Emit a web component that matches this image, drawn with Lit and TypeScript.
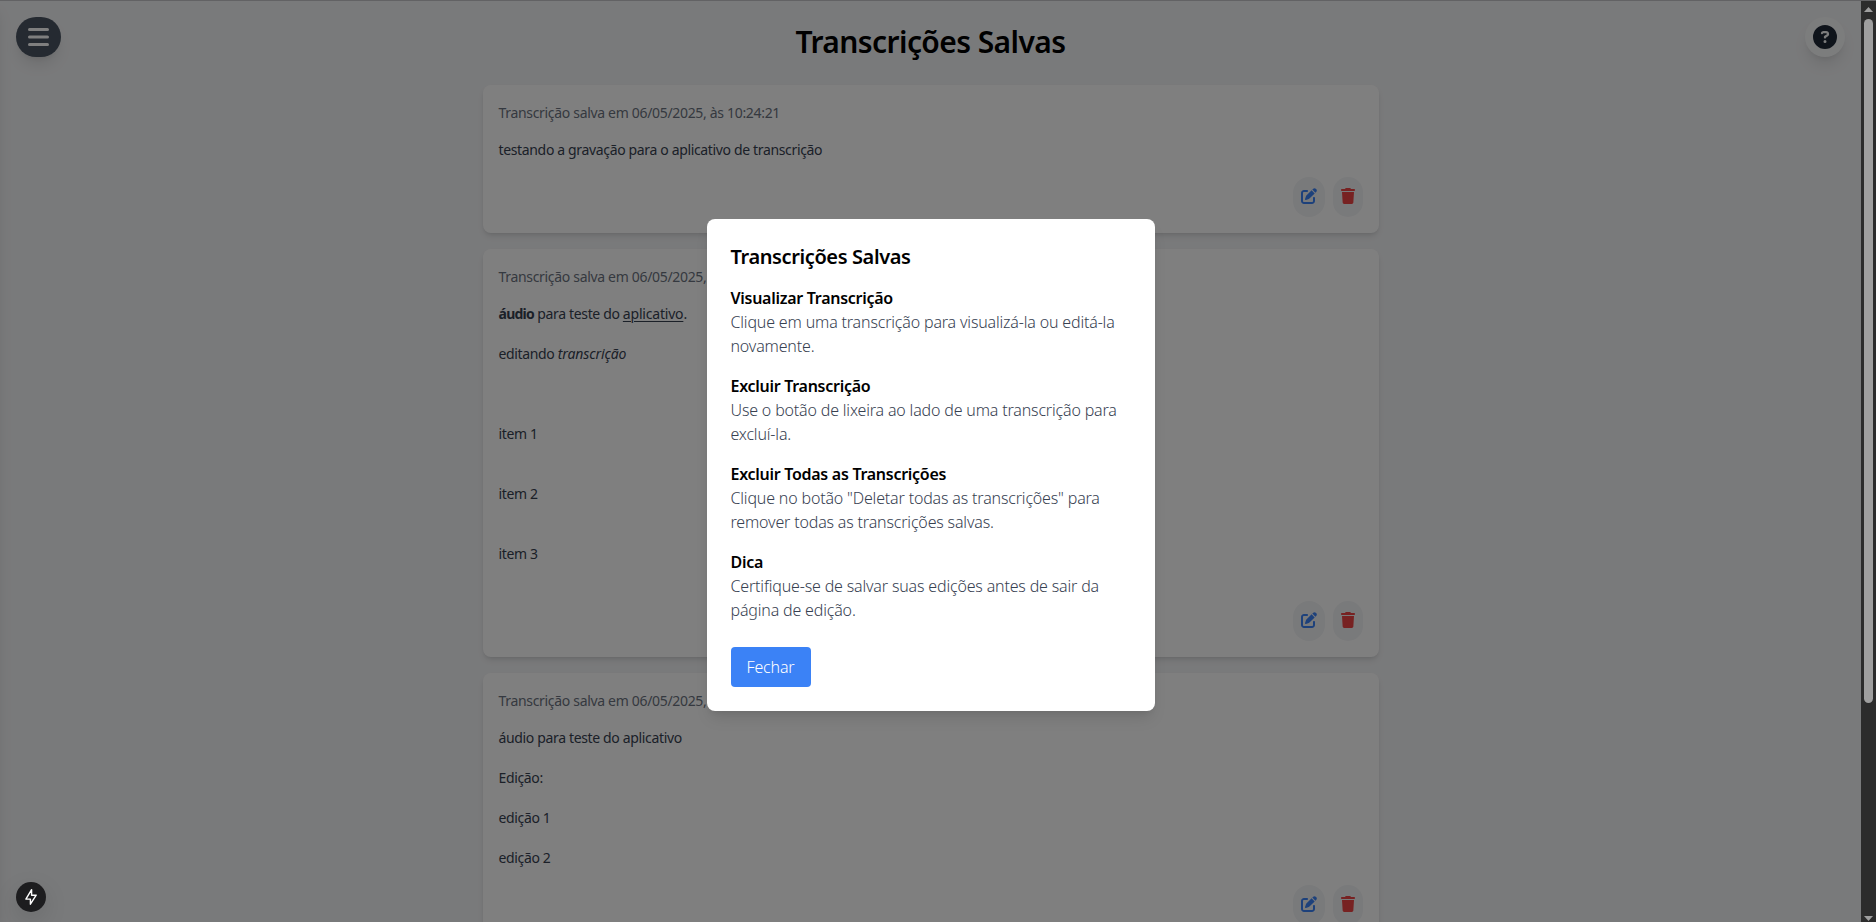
import { LitElement, html, css, svg } from "lit";
import { customElement } from "lit/decorators.js";

const barsIcon = html`<svg class="bars" viewBox="0 0 448 512">${[64, 224, 384].map(
  (y) => svg`<rect x="0" y=${y} width="448" height="64" rx="32"></rect>`
)}</svg>`;

const helpIcon = html`<svg class="help-icon" viewBox="0 0 512 512"><path d="M256 512A256 256 0 1 0 256 0a256 256 0 1 0 0 512zM169.8 165.3c7.9-22.3 29.1-37.3 52.8-37.3h58.3c34.9 0 63.1 28.3 63.1 63.1c0 22.6-12.1 43.5-31.7 54.8L280 264.4c-.2 13-10.9 23.6-24 23.6c-13.3 0-24-10.7-24-24V250.5c0-8.6 4.6-16.5 12.1-20.8l44.3-25.4c4.7-2.7 7.6-7.7 7.6-13.1c0-8.4-6.8-15.1-15.1-15.1H222.6c-3.4 0-6.4 2.1-7.5 5.3l-.4 1.2c-4.4 12.5-18.2 19-30.6 14.6s-19-18.2-14.6-30.6l.3-1.2zM224 352a32 32 0 1 1 64 0 32 32 0 1 1 -64 0z"/></svg>`;

const editIcon = html`<svg class="edit-icon" viewBox="0 0 512 512"><path d="M471.6 21.7c-21.9-21.9-57.3-21.9-79.2 0L362.3 51.7l97.9 97.9 30.1-30.1c21.9-21.9 21.9-57.3 0-79.2L471.6 21.7zm-299.2 220c-6.1 6.1-10.8 13.6-13.5 21.9l-29.6 88.8c-2.9 8.6-.6 18.1 5.8 24.6s15.9 8.7 24.6 5.8l88.8-29.6c8.2-2.7 15.7-7.4 21.9-13.5L437.7 172.3 339.7 74.3 172.4 241.7zM96 64C43 64 0 107 0 160V416c0 53 43 96 96 96H352c53 0 96-43 96-96V320c0-17.7-14.3-32-32-32s-32 14.3-32 32v96c0 17.7-14.3 32-32 32H96c-17.7 0-32-14.3-32-32V160c0-17.7 14.3-32 32-32h96c17.7 0 32-14.3 32-32s-14.3-32-32-32H96z"/></svg>`;

const trashIcon = html`<svg class="trash-icon" viewBox="0 0 448 512"><path d="M135.2 17.7L128 32H32C14.3 32 0 46.3 0 64S14.3 96 32 96H416c17.7 0 32-14.3 32-32s-14.3-32-32-32H320l-7.2-14.3C307.4 6.8 296.3 0 284.2 0H163.8c-12.1 0-23.2 6.8-28.6 17.7zM416 128H32L53.2 467c1.6 25.3 22.6 45 47.9 45H346.9c25.3 0 46.3-19.7 47.9-45L416 128z"/></svg>`;

const cards = [
  { time: "10:24:21", lines: [html`testando a gravação para o aplicativo de transcrição`] },
  {
    time: "10:20:47",
    lines: [
      html`<b>áudio</b> para teste do <u>aplicativo</u>.`, "",
      html`editando <i>transcrição</i>`, "", "", "",
      "item 1", "", "",
      "item 2", "", "",
      "item 3", "",
    ],
  },
  {
    time: "10:18:05",
    lines: ["áudio para teste do aplicativo", "", "Edição:", "", "edição 1", "", "edição 2"],
  },
];

const help = [
  ["Visualizar Transcrição", "Clique em uma transcrição para visualizá-la ou editá-la novamente."],
  ["Excluir Transcrição", "Use o botão de lixeira ao lado de uma transcrição para excluí-la."],
  ["Excluir Todas as Transcrições", 'Clique no botão "Deletar todas as transcrições" para remover todas as transcrições salvas.'],
  ["Dica", "Certifique-se de salvar suas edições antes de sair da página de edição."],
];

@customElement("app-root")
export class AppRoot extends LitElement {
  static styles = css`
    :host {
      display: flex;
      height: 922px;
      box-sizing: border-box;
      border-top: 1px solid #626264;
      position: relative;
      overflow: hidden;
      font-family: "Noto Sans", sans-serif;
      font-size: 16px;
      line-height: 24px;
      font-weight: 300;
    }
    * { box-sizing: border-box; }
    h1, h2, h3, p { margin: 0; }
    button { border: 0; margin: 0; font: inherit; display: flex; align-items: center; justify-content: center; }
    svg { display: block; fill: currentColor; flex: none; }

    .viewport { position: relative; flex: 1; min-width: 0; height: 921px; overflow: hidden; background: #f3f4f6; }
    .drawer {
      position: absolute; left: -256px; top: 0; bottom: 0; width: 256px;
      box-shadow: 0 10px 15px -3px rgba(0, 0, 0, 0.1), 0 4px 6px -4px rgba(0, 0, 0, 0.1);
    }
    .menu, .help {
      position: absolute; top: 16px; height: 40px; border-radius: 9999px;
      box-shadow: 0 10px 15px -3px rgba(0, 0, 0, 0.1), 0 4px 6px -4px rgba(0, 0, 0, 0.1);
    }
    .menu { left: 16px; width: 45px; background: #4b5563; color: #fff; padding: 0 12px; }
    .help { right: 16px; width: 40px; padding: 8px; background: #f9fafb; color: #1f2937; }
    .bars { width: 21px; height: 24px; }
    .help-icon { width: 24px; height: 24px; }

    .main { display: flex; flex-direction: column; align-items: center; padding: 23px 24px 24px; }
    h1 { font-size: 30px; line-height: 36px; font-weight: 600; letter-spacing: -0.58px; margin-bottom: 25px; color: #000; }
    .list { display: flex; flex-direction: column; gap: 16px; width: 896px; }
    .card {
      background: #fff; border-radius: 8px; padding: 16px;
      box-shadow: 0 4px 6px -1px rgba(0, 0, 0, 0.1), 0 2px 4px -2px rgba(0, 0, 0, 0.1);
      display: flex; flex-direction: column;
      font-size: 14px; font-weight: 400;
    }
    .date { line-height: 24px; color: #6b7280; letter-spacing: -0.32px; }
    .text { margin: 15px 0 17px; line-height: 20px; color: #374151; letter-spacing: -0.35px; }
    .row { min-height: 20px; }
    .text b { font-weight: 700; letter-spacing: -0.75px; }
    .text i { letter-spacing: -0.11px; }
    .text u { letter-spacing: -0.2px; text-underline-offset: 2px; text-decoration-thickness: 1px; }
    .actions { display: flex; justify-content: flex-end; gap: 8px; }
    .round { height: 40px; padding: 7px 8px 9px; border-radius: 9999px; background: #f3f4f6; }
    .edit { color: #3b82f6; }
    .trash { color: #ef4444; }
    .edit-icon { width: 16px; height: 16px; }
    .trash-icon { width: 14px; height: 16px; }

    .overlay {
      position: absolute; inset: 0; background: rgba(0, 0, 0, 0.5);
      display: flex; align-items: center; justify-content: center; padding-top: 7px;
    }
    .modal {
      width: 448px; padding: 24px; background: #fff; border-radius: 8px;
      box-shadow: 0 10px 15px -3px rgba(0, 0, 0, 0.1), 0 4px 6px -4px rgba(0, 0, 0, 0.1);
      display: flex; flex-direction: column; align-items: flex-start;
    }
    h2 { font-size: 20px; line-height: 28px; font-weight: 600; letter-spacing: -0.387px; margin-bottom: 15px; color: #000; }
    .sections { display: flex; flex-direction: column; gap: 16px; margin-bottom: 25px; }
    h3 { font-size: 16px; line-height: 24px; font-weight: 600; letter-spacing: -0.28px; color: #000; }
    .sections p { color: #374151; letter-spacing: -0.17px; }
    .close { height: 40px; width: 80px; padding: 0 0 1px; border-radius: 4px; background: #3b82f6; color: #fff; letter-spacing: -0.15px; }

    .dev {
      position: absolute; left: 16px; bottom: 10px; width: 30px; height: 30px; border-radius: 50%;
      background: #1d1d1f; box-shadow: 0 8px 24px rgba(0, 0, 0, 0.12);
    }
    .dev svg { fill: none; stroke: #fff; stroke-width: 1.4; stroke-linejoin: round; }

    .scroll { width: 15px; height: 921px; background: #2c2c2c; color: #9f9f9f; display: flex; flex-direction: column; align-items: center; padding: 6px 0 1px; }
    .thumb { width: 9px; height: 684px; border-radius: 5px; background: #9f9f9f; margin: 7px 0 auto; }
  `;

  render() {
    return html`
      <div class="viewport">
        <div class="main">
          <h1>Transcrições Salvas</h1>
          <div class="list">
            ${cards.map(
              (c) => html`<article class="card">
                <p class="date">Transcrição salva em 06/05/2025, às ${c.time}</p>
                <div class="text">${c.lines.map((l) => html`<div class="row">${l}</div>`)}</div>
                <div class="actions">
                  <button class="round edit">${editIcon}</button>
                  <button class="round trash">${trashIcon}</button>
                </div>
              </article>`
            )}
          </div>
        </div>
        <div class="drawer"></div>
        <button class="menu">${barsIcon}</button>
        <button class="help">${helpIcon}</button>
        <div class="overlay">
          <div class="modal">
            <h2>Transcrições Salvas</h2>
            <div class="sections">
              ${help.map(([t, d]) => html`<section><h3>${t}</h3><p>${d}</p></section>`)}
            </div>
            <button class="close">Fechar</button>
          </div>
        </div>
        <div class="dev">
          <svg width="30" height="30" viewBox="0 0 30 30"><path d="M15.6 7.6 9.9 17.1H14.4V22.2L20.2 13.2H15.6Z" /></svg>
        </div>
      </div>
      <div class="scroll">
        <svg width="9" height="5" viewBox="0 0 9 5"><path d="M4.5 0 9 5H0Z" /></svg>
        <div class="thumb"></div>
        <svg width="9" height="5" viewBox="0 0 9 5"><path d="M4.5 5 9 0H0Z" /></svg>
      </div>
    `;
  }
}
